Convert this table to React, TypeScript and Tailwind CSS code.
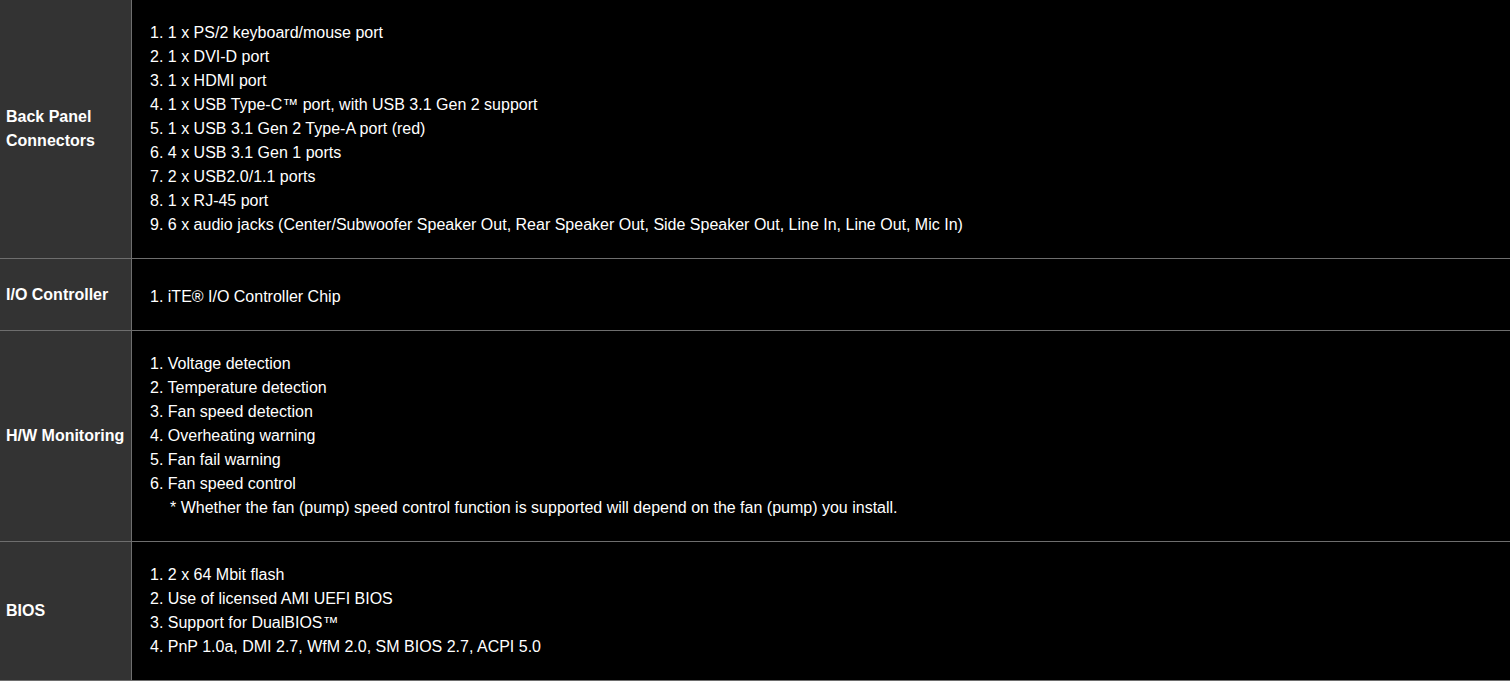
import React from "react";

type Spec = {
  label: React.ReactNode;
  items: string[];
  note?: string;
  top?: string;
};

const specs: Spec[] = [
  {
    label: (
      <>
        Back Panel
        <br />
        Connectors
      </>
    ),
    items: [
      "1 x PS/2 keyboard/mouse port",
      "1 x DVI-D port",
      "1 x HDMI port",
      "1 x USB Type-C\u2122 port, with USB 3.1 Gen 2 support",
      "1 x USB 3.1 Gen 2 Type-A port (red)",
      "4 x USB 3.1 Gen 1 ports",
      "2 x USB2.0/1.1 ports",
      "1 x RJ-45 port",
      "6 x audio jacks (Center/Subwoofer Speaker Out, Rear Speaker Out, Side Speaker Out, Line In, Line Out, Mic In)",
    ],
  },
  {
    label: "I/O Controller",
    items: ["iTE\u00ae I/O Controller Chip"],
    top: "pt-[26px] pb-[21px]",
  },
  {
    label: "H/W Monitoring",
    items: [
      "Voltage detection",
      "Temperature detection",
      "Fan speed detection",
      "Overheating warning",
      "Fan fail warning",
      "Fan speed control",
    ],
    note: "* Whether the fan (pump) speed control function is supported will depend on the fan (pump) you install.",
  },
  {
    label: "BIOS",
    items: [
      "2 x 64 Mbit flash",
      "Use of licensed AMI UEFI BIOS",
      "Support for DualBIOS\u2122",
      "PnP 1.0a, DMI 2.7, WfM 2.0, SM BIOS 2.7, ACPI 5.0",
    ],
  },
];

export default function App() {
  return (
    <div className="min-h-screen w-full bg-black font-['Liberation_Sans',Arial,sans-serif] text-[16px] leading-[24px] text-white">
      {specs.map((row, i) => (
        <div key={i} className="flex border-b border-[#6e6e6e]">
          <div className="flex w-[132px] shrink-0 items-center border-r border-[#6e6e6e] bg-[#333333] px-[6px] font-bold">
            <span>{row.label}</span>
          </div>
          <div className={`flex-1 pl-[18px] ${row.top ?? "pt-[21px] pb-[21px]"}`}>
            {row.items.map((item, j) => (
              <div key={j}>
                {j + 1}. {item}
              </div>
            ))}
            {row.note && <div className="pl-[20px]">{row.note}</div>}
          </div>
        </div>
      ))}
    </div>
  );
}
